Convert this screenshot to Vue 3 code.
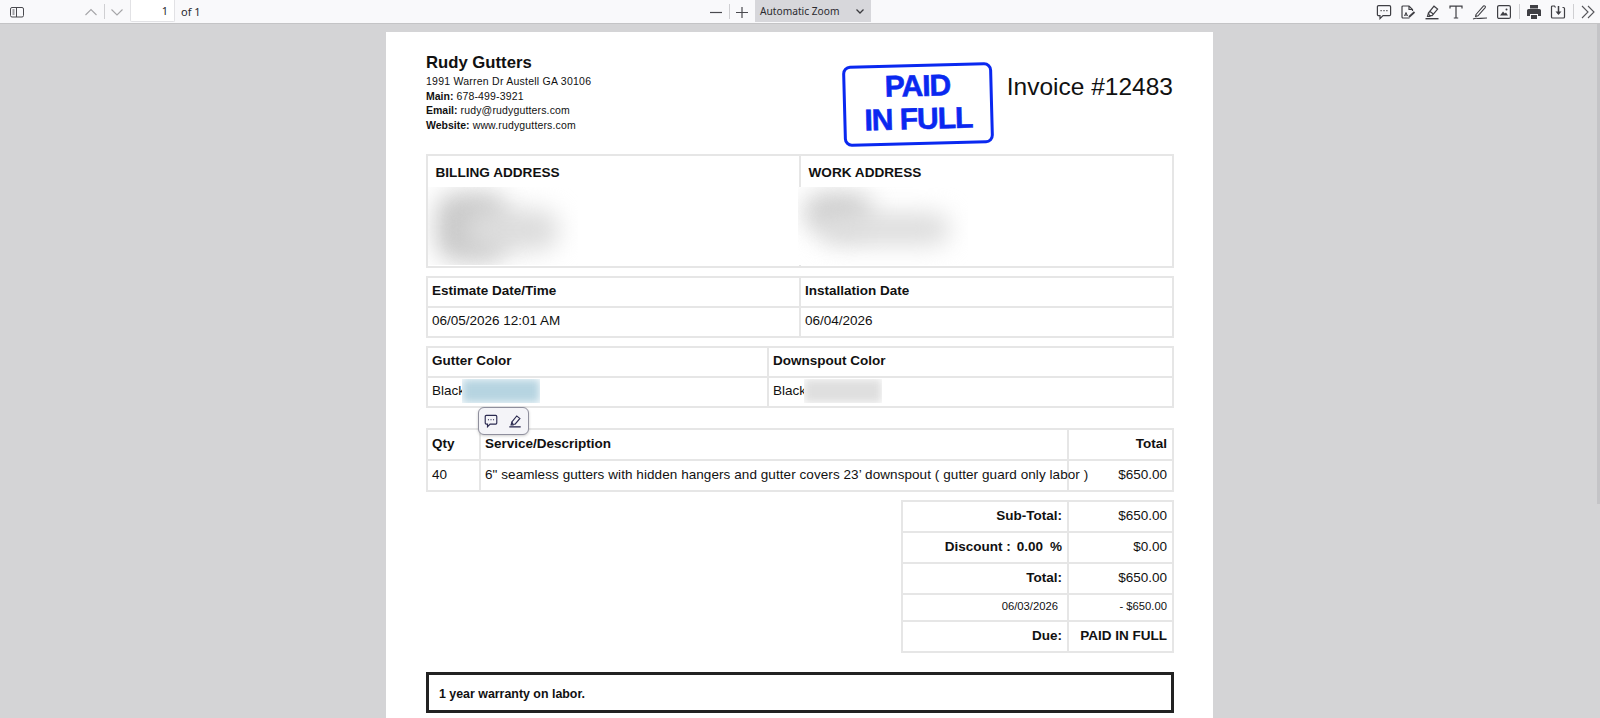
<script setup>
const summaryRows = [
  { label: 'Sub-Total:', value: '$650.00', height: 'row-31' },
  { label: 'Discount :', value: '$0.00', height: 'row-31', discount: true },
  { label: 'Total:', value: '$650.00', height: 'row-31' },
  { label: '06/03/2026', value: '- $650.00', height: 'row-27 small', plain: true },
  { label: 'Due:', value: 'PAID IN FULL', height: 'row-31', boldValue: true },
]
</script>

<template>
  <div class="viewer">
    <div class="toolbar">
      <div class="tb-left">
        <button class="tb-btn sidebar-btn">
          <svg width="16" height="16" viewBox="0 0 16 16" fill="none" stroke="#4a4a4f" stroke-width="1">
            <rect x="1.5" y="3.5" width="13" height="9.5" rx="1.5" />
            <path d="M7.5 3.5v9.5" />
            <path d="M3.5 6h2M3.5 8h2M3.5 10h2" />
          </svg>
        </button>
        <button class="tb-btn up-btn">
          <svg width="14" height="14" viewBox="0 0 14 14" fill="none" stroke="#a5a5a8" stroke-width="1.1">
            <path d="M1.5 10 7 4.5 12.5 10" />
          </svg>
        </button>
        <span class="tb-sep"></span>
        <button class="tb-btn down-btn">
          <svg width="14" height="14" viewBox="0 0 14 14" fill="none" stroke="#a5a5a8" stroke-width="1.1">
            <path d="M1.5 4.5 7 10l5.5-5.5" />
          </svg>
        </button>
        <div class="page-input">1</div>
        <span class="page-of">of 1</span>
      </div>

      <div class="tb-center">
        <button class="tb-btn">
          <svg width="14" height="14" viewBox="0 0 14 14" stroke="#4a4a4f" stroke-width="1.2"><path d="M1 7.5h12" /></svg>
        </button>
        <span class="tb-sep"></span>
        <button class="tb-btn">
          <svg width="14" height="14" viewBox="0 0 14 14" stroke="#4a4a4f" stroke-width="1.2"><path d="M1 7.5h12M7 2v11" /></svg>
        </button>
        <div class="zoom-select">
          <span>Automatic Zoom</span>
          <svg width="10" height="10" viewBox="0 0 10 10" fill="none" stroke="#3c3c40" stroke-width="1.3">
            <path d="M1.5 3.5 5 7l3.5-3.5" />
          </svg>
        </div>
      </div>

      <div class="tb-right">
        <button class="tb-icon">
          <svg width="16" height="16" viewBox="0 0 16 16" fill="none" stroke="#3f3f44" stroke-width="1.2">
            <path d="M2.6 1.6h10.8a1.2 1.2 0 0 1 1.2 1.2v7.6a1.2 1.2 0 0 1-1.2 1.2H7l-3 3v-3H2.6a1.2 1.2 0 0 1-1.2-1.2V2.8a1.2 1.2 0 0 1 1.2-1.2z" />
            <path d="M4.5 6.6h1.2M7.4 6.6h1.2M10.3 6.6h1.2" />
          </svg>
        </button>
        <button class="tb-icon">
          <svg width="16" height="16" viewBox="0 0 16 16" fill="none" stroke="#3f3f44" stroke-width="1.2">
            <path d="M9.5 14H3a1 1 0 0 1-1-1V3a1 1 0 0 1 1-1h6l3.5 3.5V7" />
            <path d="M9 2v3.5h3.5" />
            <path d="m9 13 5.5-5" stroke-width="1.8" />
            <path d="M4.5 12 6 8.5 7.5 12M5 11h2" stroke-width="1" />
          </svg>
        </button>
        <button class="tb-icon">
          <svg width="16" height="16" viewBox="0 0 16 16" fill="none" stroke="#3f3f44" stroke-width="1.2">
            <path d="M1.5 14.7h13" stroke-width="1.4" />
            <path d="m4.5 9 5.5-6.8 3.6 2.9-5.5 6.6H5.5z" />
            <path d="M4.5 9 3.5 12.5h3" />
            <path d="m6 7.5 3.3 2.5" />
          </svg>
        </button>
        <button class="tb-icon">
          <svg width="16" height="16" viewBox="0 0 16 16" fill="none" stroke="#3f3f44" stroke-width="1.2">
            <path d="M2 4.5V2.2h12v2.3M8 2.2V14M5.8 14h4.4" />
          </svg>
        </button>
        <button class="tb-icon">
          <svg width="16" height="16" viewBox="0 0 16 16" fill="none" stroke="#3f3f44" stroke-width="1.1">
            <path d="m4 10.5 7.5-8.5c1-.8 2.5.5 1.7 1.6L6 11.8l-2.400.6z" />
            <path d="M1 15c4-1.500 3-.5 5-.5s4-.5 9-.5" />
          </svg>
        </button>
        <button class="tb-icon">
          <svg width="16" height="16" viewBox="0 0 16 16" fill="none" stroke="#3f3f44" stroke-width="1.2">
            <rect x="1.6" y="1.6" width="12.8" height="12.8" rx="1.5" />
            <path d="M4 11.5 7 7.5l1.8 2 1.2-1 2 3z" fill="#3f3f44" stroke="none" />
            <circle cx="10.5" cy="5.5" r="1" fill="#3f3f44" stroke="none" />
          </svg>
        </button>
        <span class="tb-sep right-sep"></span>
        <button class="tb-icon">
          <svg width="16" height="16" viewBox="0 0 16 16" fill="#3f3f44">
            <path d="M4 1h8v3.5H4z" />
            <path d="M2.5 5h11A1.500 1.500 0 0 1 15 6.5V12h-3v-2H4v2H1V6.5A1.500 1.500 0 0 1 2.500 5z" />
            <path d="M5 11h6v4H5z" />
          </svg>
        </button>
        <button class="tb-icon">
          <svg width="16" height="16" viewBox="0 0 16 16" fill="none" stroke="#3f3f44" stroke-width="1.2">
            <path d="M5.5 3.5 4.5 2h-2a1 1 0 0 0-1 1v10a1 1 0 0 0 1 1h11a1 1 0 0 0 1-1V4.500a1 1 0 0 0-1-1h-1" />
            <path d="M8.5 2v7.5" stroke-width="1.5" />
            <path d="m5.5 7.5 3 3.5 3-3.5z" fill="#3f3f44" stroke="none" />
          </svg>
        </button>
        <span class="tb-sep right-sep"></span>
        <button class="tb-icon">
          <svg width="16" height="16" viewBox="0 0 16 16" fill="none" stroke="#55555a" stroke-width="1.1">
            <path d="m2 2 6 6-6 6M8 2l6 6-6 6" />
          </svg>
        </button>
      </div>
    </div>

    <div class="canvas">
      <div class="page">
        <div class="header">
          <div class="company">
            <div class="company-name">Rudy Gutters</div>
            <div class="company-line addr">1991 Warren Dr Austell GA 30106</div>
            <div class="company-line"><b>Main:</b> 678-499-3921</div>
            <div class="company-line"><b>Email:</b> rudy@rudygutters.com</div>
            <div class="company-line"><b>Website:</b> www.rudygutters.com</div>
          </div>
          <div class="header-right">
            <div class="stamp">PAID<br />IN FULL</div>
            <div class="invoice-no">Invoice #12483</div>
          </div>
        </div>

        <table class="grid address-table">
          <tr>
            <td class="half"><b>BILLING ADDRESS</b></td>
            <td><b>WORK ADDRESS</b></td>
          </tr>
        </table>

        <table class="grid">
          <tr class="row-30">
            <td class="half"><b>Estimate Date/Time</b></td>
            <td><b>Installation Date</b></td>
          </tr>
          <tr class="row-30">
            <td>06/05/2026 12:01 AM</td>
            <td>06/04/2026</td>
          </tr>
        </table>

        <table class="grid">
          <tr class="row-30">
            <td class="color-col"><b>Gutter Color</b></td>
            <td><b>Downspout Color</b></td>
          </tr>
          <tr class="row-30">
            <td>Black</td>
            <td>Black</td>
          </tr>
        </table>

        <table class="grid items-table">
          <tr class="row-31">
            <td class="qty-col"><b>Qty</b></td>
            <td class="desc-col"><b>Service/Description</b></td>
            <td class="right"><b>Total</b></td>
          </tr>
          <tr class="row-31">
            <td>40</td>
            <td class="desc">6" seamless gutters with hidden hangers and gutter covers 23’ downspout ( gutter guard only labor )</td>
            <td class="right">$650.00</td>
          </tr>
        </table>

        <table class="grid summary">
          <tr v-for="row in summaryRows" :key="row.label" :class="row.height">
            <td v-if="row.plain" class="right pay-date">{{ row.label }}</td>
            <td v-else class="right">
              <b>{{ row.label }}</b>
              <template v-if="row.discount"><b class="disc-num">0.00</b><b class="disc-pct">%</b></template>
            </td>
            <td class="right val-col">
              <b v-if="row.boldValue">{{ row.value }}</b>
              <template v-else>{{ row.value }}</template>
            </td>
          </tr>
        </table>

        <div class="warranty">1 year warranty on labor.</div>

        <!-- redacted bits sit over the tables -->
        <div class="redact billing"><i class="blob b1"></i><i class="blob b2"></i></div>
        <div class="redact work"><i class="blob b1"></i><i class="blob b2"></i></div>
        <div class="redact-strip gutter-strip"><i></i></div>
        <div class="redact-strip spout-strip"><i></i></div>

        <div class="selection-popup">
          <svg width="14" height="14" viewBox="0 0 16 16" fill="none" stroke="#2b2a50" stroke-width="1.3">
            <path d="M2.6 1.6h10.8a1.2 1.2 0 0 1 1.2 1.2v7.6a1.2 1.2 0 0 1-1.2 1.2H7l-3 3v-3H2.6a1.2 1.2 0 0 1-1.2-1.2V2.8a1.2 1.2 0 0 1 1.2-1.2z" />
            <path d="M4.5 6.6h1.2M7.4 6.6h1.2M10.3 6.6h1.2" />
          </svg>
          <svg width="14" height="14" viewBox="0 0 16 16" fill="none" stroke="#2b2a50" stroke-width="1.3">
            <path d="M1.5 14.7h13" stroke-width="1.5" />
            <path d="m4.5 9 5.5-6.8 3.6 2.9-5.5 6.6H5.500z" />
            <path d="M4.5 9 3.500 12.500h3" />
          </svg>
        </div>
      </div>
      <div class="scroll-thumb"></div>
    </div>
  </div>
</template>

<style>
html,
body {
  margin: 0;
  height: 718px;
  overflow: hidden;
}
</style>

<style scoped>
.viewer {
  width: 1600px;
  height: 718px;
  display: flex;
  flex-direction: column;
  background: #d4d4d6;
  font-family: 'Liberation Sans', Arial, sans-serif;
  overflow: hidden;
}

/* --- Toolbar --- */
.toolbar {
  height: 23px;
  flex-shrink: 0;
  position: relative;
  display: flex;
  align-items: center;
  background: #f9f9fb;
  border-bottom: 1px solid #c4c4c6;
  font-family: 'Noto Sans', 'Open Sans', sans-serif;
  font-size: 11px;
  color: #2a2a2e;
}
button {
  padding: 0;
  border: 0;
  background: none;
  display: flex;
  align-items: center;
  justify-content: center;
}
.tb-left {
  display: flex;
  align-items: center;
  height: 100%;
  width: 700px;
}
.sidebar-btn {
  margin-left: 9px;
  width: 16px;
}
.up-btn {
  margin-left: 59px;
  width: 14px;
}
.down-btn {
  margin-left: 5px;
  width: 14px;
}
.tb-left .tb-sep {
  margin-left: 6px;
}
.tb-sep {
  width: 1px;
  height: 15px;
  background: #cfcfd2;
  flex-shrink: 0;
}
.page-input {
  margin-left: 6px;
  width: 45px;
  height: 22px;
  box-sizing: border-box;
  padding: 3px 6px 0 0;
  text-align: right;
  background: #fff;
  border: 1px solid #e2e2e5;
  border-top: 0;
  border-radius: 0 0 2px 2px;
  align-self: flex-start;
  font-size: 11px;
}
.page-of {
  margin-left: 6px;
}
.tb-center {
  display: flex;
  align-items: center;
  height: 100%;
}
.tb-center .tb-btn {
  width: 14px;
}
.tb-center .tb-btn:first-child {
  margin-left: 9px;
}
.tb-center .tb-sep {
  margin: 0 5px 0 6px;
}
.zoom-select {
  margin-left: 6px;
  width: 116px;
  height: 22px;
  align-self: flex-start;
  box-sizing: border-box;
  padding: 0 6px 0 5px;
  display: flex;
  align-items: center;
  justify-content: space-between;
  background: #d7d7db;
  font-size: 10.2px;
}
.tb-right {
  margin-left: auto;
  display: flex;
  align-items: center;
}
.tb-icon {
  width: 24px;
  height: 22px;
}
.right-sep {
  margin: 0 2.5px;
}

/* --- Page --- */
.canvas {
  flex: 1;
  position: relative;
  padding-top: 8px;
  overflow: hidden;
}
.page {
  position: relative;
  width: 747px;
  height: 800px;
  margin-left: 386px;
  padding: 21px 40px 0;
  background: #fff;
  color: #111;
}
.scroll-thumb {
  position: absolute;
  top: 0;
  right: 0;
  width: 3px;
  height: 480px;
  background: #c4c4c7;
}
.header {
  height: 101px;
  display: flex;
  justify-content: space-between;
}
.company-name {
  font-size: 16.7px;
  font-weight: 700;
  line-height: 20px;
  margin-bottom: 1px;
}
.company-line {
  font-size: 10.5px;
  line-height: 14.7px;
  letter-spacing: 0.15px;
}
.company-line.addr {
  letter-spacing: 0.24px;
}
.company-line b {
  letter-spacing: 0;
}
.header-right {
  display: flex;
  align-items: flex-start;
}
.stamp {
  width: 144px;
  height: 73px;
  padding-top: 2px;
  margin-top: 11px;
  border: 3.5px solid #0a28f0;
  border-radius: 8px;
  color: #0a28f0;
  font-size: 30px;
  font-weight: 700;
  line-height: 33px;
  letter-spacing: -1px;
  -webkit-text-stroke: 0.6px #0a28f0;
  text-align: center;
  transform: rotate(-1.5deg);
}
.invoice-no {
  margin-left: 14px;
  margin-top: 19px;
  font-size: 24.5px;
  line-height: 30px;
  color: #111;
}

/* --- Tables --- */
.grid {
  width: 748px;
  margin-bottom: 8px;
  border-collapse: collapse;
  table-layout: fixed;
  font-size: 13.5px;
}
.grid td {
  box-sizing: border-box;
  border: 2px solid #e6e6e6;
  padding: 0 5px 3px 4px;
  white-space: nowrap;
}
.half {
  width: 373px;
}
.color-col {
  width: 341px;
}
.grid.address-table td {
  height: 112px;
  padding: 9px 8px 0 7.5px;
  vertical-align: top;
  font-size: 13.6px;
}
.row-30 {
  height: 30px;
}
.row-31 {
  height: 31px;
}
.row-27 {
  height: 27px;
}
.items-table {
  margin-top: 20px;
}
.qty-col {
  width: 53px;
}
.desc-col {
  width: 588px;
}
.desc {
  overflow: visible;
  letter-spacing: 0.07px;
}
.right {
  text-align: right;
}
.summary {
  width: 273px;
  margin-left: 475px;
  margin-bottom: 19px;
}
.summary .val-col {
  width: 105px;
}
.disc-num {
  margin-left: 6px;
}
.disc-pct {
  margin-left: 7px;
}
.small td {
  font-size: 11.25px;
}
.grid .pay-date {
  padding-right: 9px;
}
.warranty {
  width: 732px;
  height: 33px;
  padding: 2px 0 0 10px;
  line-height: 35px;
  border: 3px solid #222;
  font-size: 12.4px;
  font-weight: 700;
  color: #111;
}

/* --- Redactions --- */
.redact {
  position: absolute;
  top: 155px;
  height: 78px;
  background: #fff;
  overflow: hidden;
}
.billing {
  left: 42px;
  width: 150px;
}
.work {
  left: 412px;
  width: 170px;
}
.blob {
  position: absolute;
  display: block;
  border-radius: 20px;
  filter: blur(12px);
}
.billing .b1 {
  left: 8px;
  top: 6px;
  width: 70px;
  height: 68px;
  background: #c8c8c8;
}
.billing .b2 {
  left: 36px;
  top: 22px;
  width: 95px;
  height: 42px;
  background: #dcdcdc;
}
.work .b1 {
  left: 6px;
  top: 6px;
  width: 68px;
  height: 38px;
  background: #cdcdcd;
}
.work .b2 {
  left: 22px;
  top: 26px;
  width: 130px;
  height: 32px;
  background: #dcdcdc;
}
.redact-strip {
  position: absolute;
  top: 347px;
  width: 78px;
  height: 24px;
  background: #fff;
  overflow: hidden;
}
.redact-strip i {
  display: block;
  height: 100%;
  filter: blur(4px);
}
.gutter-strip {
  left: 76px;
}
.gutter-strip i {
  background: #b6d4e1;
}
.spout-strip {
  left: 418px;
}
.spout-strip i {
  background: #dfdfdf;
}
.selection-popup {
  position: absolute;
  left: 92px;
  top: 375px;
  width: 51px;
  height: 28px;
  box-sizing: border-box;
  padding-right: 2px;
  display: flex;
  align-items: center;
  justify-content: center;
  gap: 10px;
  background: #f4f4f8;
  border: 1px solid #8f8f9d;
  border-radius: 6px;
  box-shadow: 0 1px 3px rgba(0, 0, 0, 0.2);
}
</style>
